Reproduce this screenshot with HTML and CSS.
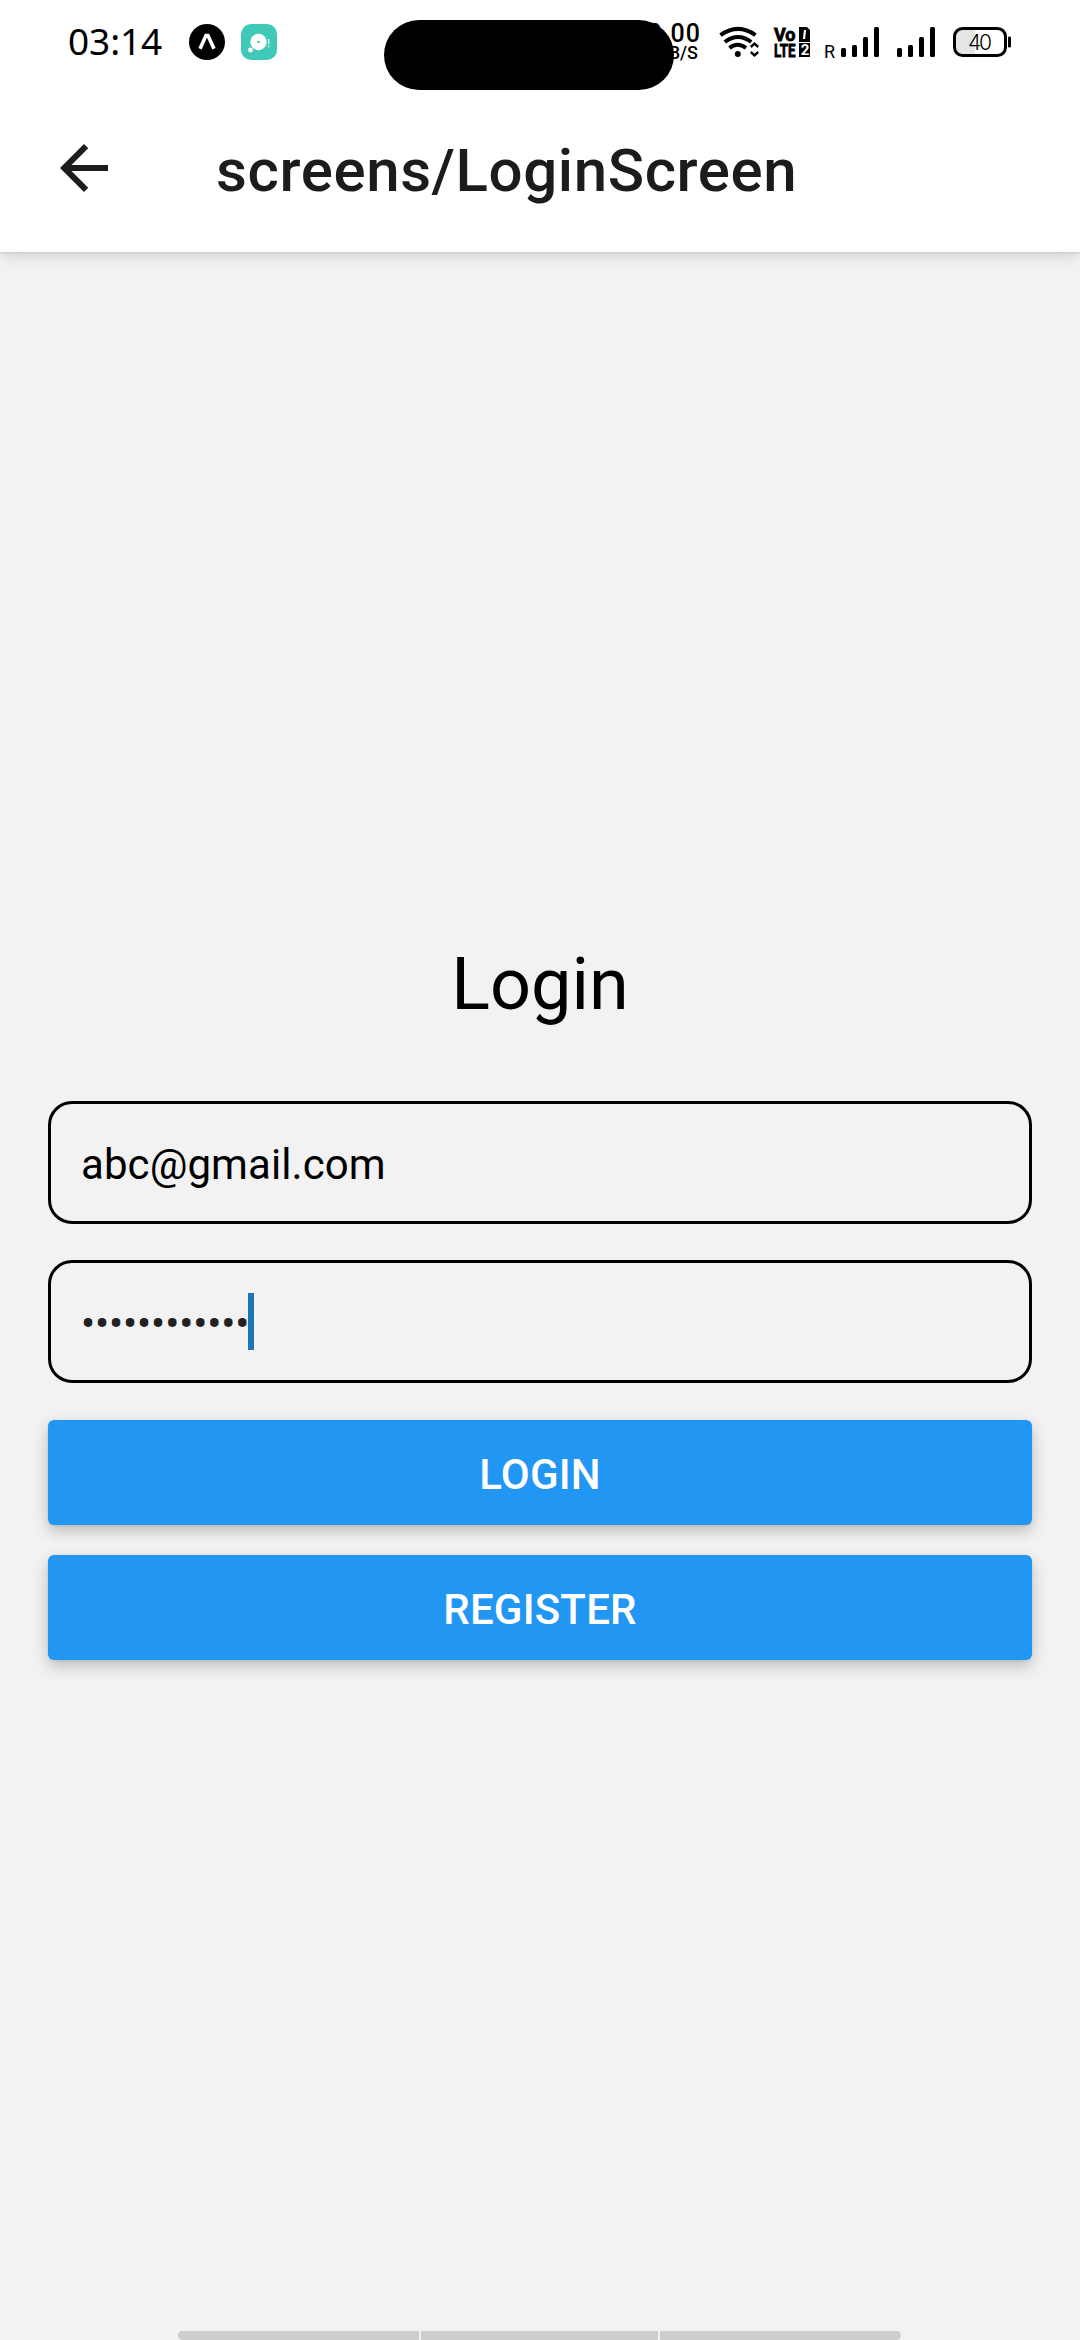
FILE: index.html
```html
<!DOCTYPE html>
<html lang="en">
<head>
<meta charset="utf-8">
<title>screens/LoginScreen</title>
<link rel="stylesheet" href="styles.css">
</head>
<body>
<div class="screen">
  <div class="top">
    <div class="status">
      <span class="clock">03:14</span>
      <svg class="app-icon" width="36" height="36" viewBox="0 0 36 36"><circle cx="18" cy="18" r="18" fill="#000"/><path d="M11 24.8 17 11.5h2L25 24.8" fill="none" stroke="#fff" stroke-width="3.6"/></svg>
      <svg class="chat-icon" width="36" height="36" viewBox="0 0 36 36"><rect width="36" height="36" rx="10" fill="#40c9b7"/><circle cx="17.5" cy="18" r="8.2" fill="#fff"/><circle cx="17.5" cy="18" r="1.3" fill="#40c9b7"/><circle cx="9.5" cy="26" r="2.4" fill="#fff"/><path d="M27.7 15v5M27.7 21.5v1.7" stroke="#d4f5ef" stroke-width="1.4"/></svg>
      <div class="right">
        <div class="speed"><span>0.00</span><span class="unit">KB/S</span></div>
        <svg class="wifi" width="41" height="30" viewBox="0 0 41 30"><g fill="none" stroke="#000" stroke-width="4"><path d="M1.5 8.2Q19 -4.5 36.5 8.2"/><path d="M5.8 15Q19 5 32.2 15"/><path d="M10.5 21Q18.5 14.5 27 21"/></g><circle cx="18.8" cy="27" r="3"/><path d="M31.8 20 35.5 16.7 39.2 20M31.8 25 35.5 28.3 39.2 25" fill="none" stroke="#000" stroke-width="2.4"/></svg>
        <svg class="volte" width="36" height="30" viewBox="0 0 36 30"><g class="volte-text"><text x="0" y="14" textLength="21.5" lengthAdjust="spacingAndGlyphs">Vo</text><text x="0" y="29.7" textLength="21.5" lengthAdjust="spacingAndGlyphs">LTE</text></g><path d="M25 0h8l3 3v12H25zM25 16h11v14H25z"/><path d="M31 3 30 12" stroke="#fff" stroke-width="2.2"/><text class="sim" x="26.8" y="28">2</text></svg>
        <svg class="signal-one" width="55" height="34" viewBox="0 0 55 34"><text class="roam" x="0" y="33">R</text><rect x="17" y="23" width="5" height="9" rx="1.5"/><rect x="28" y="20" width="5" height="12" rx="1.5"/><rect x="39" y="12" width="5" height="20" rx="1.5"/><rect x="50" y="2" width="5" height="30" rx="1.5"/></svg>
        <svg class="signal-two" width="38" height="30" viewBox="0 0 38 30"><rect y="21" width="5" height="9" rx="1.5"/><rect x="11" y="18" width="5" height="12" rx="1.5"/><rect x="22" y="10" width="5" height="20" rx="1.5"/><rect x="33" width="5" height="30" rx="1.5"/></svg>
        <svg class="battery" width="58" height="30" viewBox="0 0 58 30"><path d="M22 1.5H9.5a8 8 0 0 0-8 8v11a8 8 0 0 0 8 8H22z" fill="#e5e5e5"/><rect x="1.5" y="1.5" width="51" height="27" rx="8" fill="none" stroke="#000" stroke-width="3"/><rect x="55" y="9.5" width="3" height="11" rx="1.2"/><text x="15" y="22.5" textLength="24">40</text></svg>
      </div>
      <div class="cutout"></div>
    </div>
    <header class="header">
      <svg class="back" width="48" height="48" viewBox="4 4 16 16"><path d="M20 11H7.83l5.59-5.59L12 4l-8 8 8 8 1.41-1.41L7.83 13H20v-2z" fill="#1c1c1e"/></svg>
      <h1 class="title">screens/LoginScreen</h1>
    </header>
  </div>
  <main class="form">
    <h2 class="heading">Login</h2>
    <div class="field">abc@gmail.com</div>
    <div class="field password"><span class="mask">••••••••••••</span><i class="caret"></i></div>
    <div class="button">LOGIN</div>
    <div class="button">REGISTER</div>
  </main>
  <div class="nav"><i></i><i></i><i></i></div>
</div>
</body>
</html>
```
FILE: styles.css
```css
* { box-sizing: border-box; }
body { margin: 0; background: #f2f2f2; font-family: Roboto, sans-serif; color: #000; }
.screen { width: 1080px; height: 2340px; display: flex; flex-direction: column; background: #f2f2f2; overflow: hidden; }
.top { height: 252px; background: #fff; box-shadow: 0 1px 2px rgba(0,0,0,.08), 0 3px 14px rgba(0,0,0,.15); }
.status { position: relative; height: 84px; padding: 0 69px 0 68px; display: flex; align-items: center; }
.status svg { overflow: visible; }
.clock { width: 121px; font: 400 37px/50px "Noto Sans", sans-serif; letter-spacing: -.1px; margin-top: -2px; }
.chat-icon { margin-left: 16px; }
.right { margin-left: auto; display: flex; align-items: center; }
.speed { width: 60px; display: flex; flex-direction: column; align-items: flex-end; font: 500 25px/20px Roboto, sans-serif; letter-spacing: 1px; margin-right: 18px; }
.unit { font-size: 18px; line-height: 17px; margin-right: 3px; letter-spacing: 0; }
.volte { margin-left: 14px; }
.volte-text { font: 700 18px Roboto, sans-serif; stroke: #000; stroke-width: .8px; }
.sim { font: 700 15px Roboto, sans-serif; fill: #fff; }
.roam { font: 400 18px Roboto, sans-serif; }
.signal-one { margin-left: 14px; }
.signal-two { margin-left: 18px; }
.battery { margin-left: 18px; font: 300 21px Inter, sans-serif; }
.cutout { position: absolute; left: 384px; top: 20px; width: 290px; height: 70px; border-radius: 35px; background: #000; }
.header { height: 168px; padding-left: 60px; display: flex; align-items: center; }
.title { margin: 0 0 0 108px; padding-top: 5px; font: 500 60px/70px Roboto, sans-serif; letter-spacing: .6px; color: #1c1c1e; }
.form { padding: 691px 48px 0; display: flex; flex-direction: column; }
.heading { margin: 0 0 74px; font: 400 72px/84px Roboto, sans-serif; text-align: center; }
.field { height: 123px; margin-bottom: 36px; border: 3px solid #000; border-radius: 24px; padding: 4px 30px 0; display: flex; align-items: center; font-size: 42px; letter-spacing: .08px; }
.password { margin-bottom: 37px; padding-top: 0; color: #212121; }
.mask { padding-top: 4px; letter-spacing: -.15px; }
.caret { width: 6px; height: 57px; background: #1c75b5; margin-left: -1px; }
.button { height: 105px; margin-bottom: 30px; padding-top: 4px; border-radius: 6px; background: #2196f3; color: #fff; display: flex; align-items: center; justify-content: center; font-size: 42px; font-weight: 500; letter-spacing: .2px; box-shadow: 0 1px 3px rgba(0,0,0,.08), 0 6px 15px rgba(0,0,0,.22); }
.nav { width: 723px; height: 9px; margin: auto 0 0 178px; display: grid; grid-template-columns: 241px 237px 241px; gap: 2px; overflow: hidden; border-radius: 5px; }
.nav i { background: #cdcdcd; }
```
